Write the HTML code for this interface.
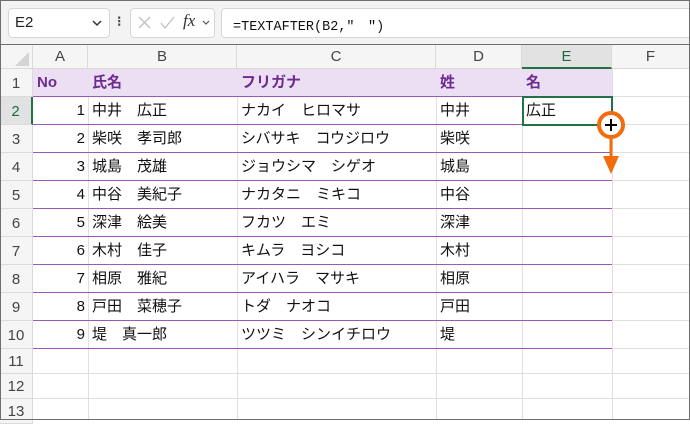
<!DOCTYPE html>
<html><head><meta charset="utf-8"><style>
*{margin:0;padding:0;box-sizing:border-box}
body{width:690px;height:420px;overflow:hidden;background:#fff;font-family:"Liberation Sans","Noto Sans CJK JP",sans-serif;position:relative}
.a{position:absolute}
#frame{left:0;top:0;width:690px;height:420px;border:1px solid #6e6e6e;z-index:50;pointer-events:none}
.tb{left:0;top:0;width:690px;height:45px;background:#f3f3f3}
.box{background:#fff;border:1px solid #d6d6d6;border-radius:4px}
.ch{top:45px;height:24px;background:#f5f5f5;border-right:1px solid #dadada;border-bottom:1px solid #dadada;font-size:15px;color:#444;text-align:center;line-height:24px}
.rh{left:0;width:33px;background:#f5f5f5;border-right:1px solid #dadada;border-bottom:1px solid #dadada;font-size:15px;color:#444;text-align:center}
.c{font-size:15px;color:#111;line-height:28px;white-space:nowrap}
.hl{font-weight:bold;color:#6b2b8f}
.vl{width:1px;background:#e0e0e0}
</style></head><body>
<div class="a tb"></div>
<div class="a box" style="left:8px;top:8px;width:102px;height:30px"></div>
<div class="a" style="left:15px;top:14px;font-size:15px;color:#222">E2</div>
<svg class="a" style="left:91px;top:18px" width="12" height="10"><path d="M2 3l4 4 4-4" stroke="#333" stroke-width="1.5" fill="none"/></svg>
<div class="a" style="left:117px;top:13px;font-size:14px;color:#444;font-weight:bold">⁝</div>
<div class="a box" style="left:130px;top:8px;width:85px;height:30px"></div>
<svg class="a" style="left:136px;top:15px" width="75" height="16"><path d="M3 2l11 11M14 2L3 13" stroke="#c0c0c0" stroke-width="1.3"/><path d="M25 8l4 5 9-11" stroke="#c0c0c0" stroke-width="1.3" fill="none"/><path d="M67 6l3 3 3-3" stroke="#555" stroke-width="1.2" fill="none"/></svg>
<div class="a" style="left:183px;top:11px;font-family:'Liberation Serif',serif;font-style:italic;font-size:17px;color:#333">fx</div>
<div class="a box" style="left:221px;top:8px;width:469px;height:30px;border-right:none;border-radius:4px 0 0 4px"></div>
<div class="a" style="left:233px;top:14px;font-size:13.5px;color:#111;font-family:'Liberation Mono','Noto Sans CJK JP',monospace;white-space:pre">=TEXTAFTER(B2,"　")</div>

<div class="a ch" style="left:0;width:33px"><svg width="28" height="22" style="position:absolute;left:3px;top:1px"><path d="M26 6L26 20L12 20Z" fill="#d4d4d4"/></svg></div>
<div class="a ch" style="left:33px;width:55px">A</div>
<div class="a ch" style="left:88px;width:149px">B</div>
<div class="a ch" style="left:237px;width:199px">C</div>
<div class="a ch" style="left:436px;width:86px">D</div>
<div class="a ch" style="left:522px;width:90px;background:#e2e2e2;color:#1e6b3f;border-bottom:2px solid #217346">E</div>
<div class="a ch" style="left:612px;width:78px">F</div>

<div class="a vl" style="left:88px;top:69px;height:351px"></div>
<div class="a vl" style="left:237px;top:69px;height:351px"></div>
<div class="a vl" style="left:436px;top:69px;height:351px"></div>
<div class="a vl" style="left:522px;top:69px;height:351px"></div>
<div class="a vl" style="left:612px;top:69px;height:351px"></div>

<div class="a" style="left:33px;top:69px;width:579px;height:28px;background:#ecdff3;border-bottom:1px solid #9b59b6"></div>

<div class="a rh" style="top:69px;height:28px;line-height:30px">1</div>
<div class="a rh" style="top:97px;height:28px;line-height:30px;color:#1e6b3f;background:#e2e2e2;border-right:2px solid #217346">2</div>
<div class="a rh" style="top:125px;height:28px;line-height:30px">3</div>
<div class="a rh" style="top:153px;height:28px;line-height:30px">4</div>
<div class="a rh" style="top:181px;height:28px;line-height:30px">5</div>
<div class="a rh" style="top:209px;height:28px;line-height:30px">6</div>
<div class="a rh" style="top:237px;height:28px;line-height:30px">7</div>
<div class="a rh" style="top:265px;height:28px;line-height:30px">8</div>
<div class="a rh" style="top:293px;height:28px;line-height:30px">9</div>
<div class="a rh" style="top:321px;height:28px;line-height:30px">10</div>
<div class="a rh" style="top:349px;height:25px;line-height:26px">11</div>
<div class="a rh" style="top:374px;height:25px;line-height:26px">12</div>
<div class="a rh" style="top:399px;height:25px;line-height:26px">13</div>

<div class="a" style="left:33px;top:124px;width:579px;height:1px;background:#9b59b6"></div>
<div class="a" style="left:33px;top:152px;width:579px;height:1px;background:#9b59b6"></div>
<div class="a" style="left:33px;top:180px;width:579px;height:1px;background:#9b59b6"></div>
<div class="a" style="left:33px;top:208px;width:579px;height:1px;background:#9b59b6"></div>
<div class="a" style="left:33px;top:236px;width:579px;height:1px;background:#9b59b6"></div>
<div class="a" style="left:33px;top:264px;width:579px;height:1px;background:#9b59b6"></div>
<div class="a" style="left:33px;top:292px;width:579px;height:1px;background:#9b59b6"></div>
<div class="a" style="left:33px;top:320px;width:579px;height:1px;background:#9b59b6"></div>
<div class="a" style="left:33px;top:348px;width:579px;height:1px;background:#9b59b6"></div>
<div class="a" style="left:612px;top:96px;width:78px;height:1px;background:#e0e0e0"></div>
<div class="a" style="left:612px;top:124px;width:78px;height:1px;background:#e0e0e0"></div>
<div class="a" style="left:612px;top:152px;width:78px;height:1px;background:#e0e0e0"></div>
<div class="a" style="left:612px;top:180px;width:78px;height:1px;background:#e0e0e0"></div>
<div class="a" style="left:612px;top:208px;width:78px;height:1px;background:#e0e0e0"></div>
<div class="a" style="left:612px;top:236px;width:78px;height:1px;background:#e0e0e0"></div>
<div class="a" style="left:612px;top:264px;width:78px;height:1px;background:#e0e0e0"></div>
<div class="a" style="left:612px;top:292px;width:78px;height:1px;background:#e0e0e0"></div>
<div class="a" style="left:612px;top:320px;width:78px;height:1px;background:#e0e0e0"></div>
<div class="a" style="left:612px;top:348px;width:78px;height:1px;background:#e0e0e0"></div>
<div class="a" style="left:33px;top:373px;width:657px;height:1px;background:#e0e0e0"></div>
<div class="a" style="left:33px;top:398px;width:657px;height:1px;background:#e0e0e0"></div>

<div class="a c hl" style="left:37px;top:69px">No</div>
<div class="a c hl" style="left:92px;top:69px">氏名</div>
<div class="a c hl" style="left:241px;top:69px">フリガナ</div>
<div class="a c hl" style="left:440px;top:69px">姓</div>
<div class="a c hl" style="left:526px;top:69px">名</div>

<div class="a c" style="left:33px;top:97px;width:52px;text-align:right">1</div><div class="a c" style="left:92px;top:97px">中井　広正</div><div class="a c" style="left:241px;top:97px">ナカイ　ヒロマサ</div><div class="a c" style="left:440px;top:97px">中井</div>
<div class="a c" style="left:33px;top:125px;width:52px;text-align:right">2</div><div class="a c" style="left:92px;top:125px">柴咲　孝司郎</div><div class="a c" style="left:241px;top:125px">シバサキ　コウジロウ</div><div class="a c" style="left:440px;top:125px">柴咲</div>
<div class="a c" style="left:33px;top:153px;width:52px;text-align:right">3</div><div class="a c" style="left:92px;top:153px">城島　茂雄</div><div class="a c" style="left:241px;top:153px">ジョウシマ　シゲオ</div><div class="a c" style="left:440px;top:153px">城島</div>
<div class="a c" style="left:33px;top:181px;width:52px;text-align:right">4</div><div class="a c" style="left:92px;top:181px">中谷　美紀子</div><div class="a c" style="left:241px;top:181px">ナカタニ　ミキコ</div><div class="a c" style="left:440px;top:181px">中谷</div>
<div class="a c" style="left:33px;top:209px;width:52px;text-align:right">5</div><div class="a c" style="left:92px;top:209px">深津　絵美</div><div class="a c" style="left:241px;top:209px">フカツ　エミ</div><div class="a c" style="left:440px;top:209px">深津</div>
<div class="a c" style="left:33px;top:237px;width:52px;text-align:right">6</div><div class="a c" style="left:92px;top:237px">木村　佳子</div><div class="a c" style="left:241px;top:237px">キムラ　ヨシコ</div><div class="a c" style="left:440px;top:237px">木村</div>
<div class="a c" style="left:33px;top:265px;width:52px;text-align:right">7</div><div class="a c" style="left:92px;top:265px">相原　雅紀</div><div class="a c" style="left:241px;top:265px">アイハラ　マサキ</div><div class="a c" style="left:440px;top:265px">相原</div>
<div class="a c" style="left:33px;top:293px;width:52px;text-align:right">8</div><div class="a c" style="left:92px;top:293px">戸田　菜穂子</div><div class="a c" style="left:241px;top:293px">トダ　ナオコ</div><div class="a c" style="left:440px;top:293px">戸田</div>
<div class="a c" style="left:33px;top:321px;width:52px;text-align:right">9</div><div class="a c" style="left:92px;top:321px">堤　真一郎</div><div class="a c" style="left:241px;top:321px">ツツミ　シンイチロウ</div><div class="a c" style="left:440px;top:321px">堤</div>

<div class="a" style="left:522px;top:96px;width:91px;height:30px;border:2px solid #217346"></div>
<div class="a c" style="left:526px;top:97px">広正</div>

<svg class="a" style="left:590px;top:108px;z-index:10" width="40" height="70">
<circle cx="21" cy="17" r="12" fill="#fff" stroke="#f26c0d" stroke-width="4"/>
<path d="M21 11v12M15 17h12" stroke="#000" stroke-width="2"/>
<path d="M21 31v28" stroke="#f26c0d" stroke-width="3"/>
<path d="M13 48h16l-8 18z" fill="#f26c0d"/>
</svg>
<div class="a" style="left:0;top:44px;width:690px;height:1px;background:#6e6e6e"></div>
<div id="frame" class="a"></div>
</body></html>
